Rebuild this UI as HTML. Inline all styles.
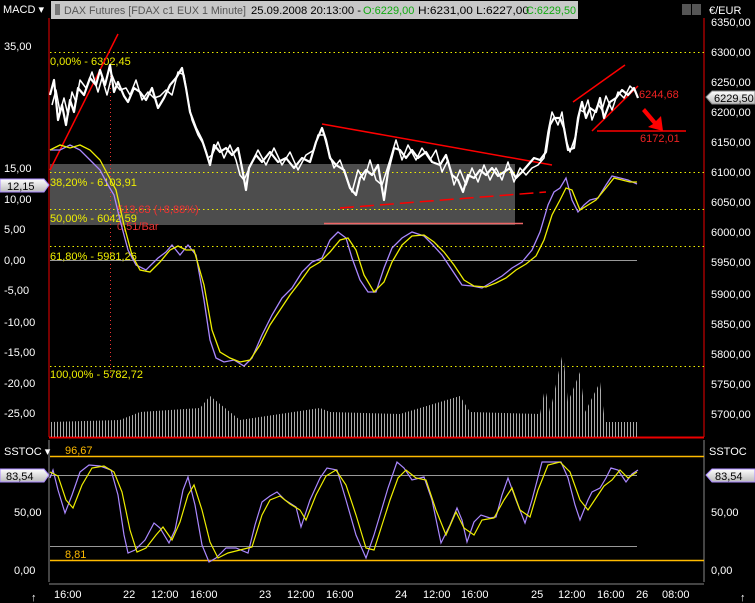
<!DOCTYPE html>
<html><head><meta charset="utf-8"><style>
html,body{margin:0;padding:0;background:#000;width:755px;height:603px;overflow:hidden}
svg{display:block}
text{font-family:"Liberation Sans",sans-serif;font-size:11px}
</style></head><body>
<svg width="755" height="603" viewBox="0 0 755 603" xmlns="http://www.w3.org/2000/svg">
<defs>
<pattern id="vs" width="3" height="10" patternUnits="userSpaceOnUse"><rect width="1" height="10" fill="#aaa"/></pattern>
<linearGradient id="lb" x1="0" y1="0" x2="0" y2="1"><stop offset="0" stop-color="#fff"/><stop offset="1" stop-color="#bbb"/></linearGradient>
</defs>
<!-- header -->
<text x="3" y="13" fill="#fff">MACD ▾</text>
<rect x="51" y="1" width="527" height="18" fill="#c8c8c8"/>
<rect x="55" y="4" width="5" height="11" fill="#777"/>
<text x="64" y="14" fill="#555" textLength="182" lengthAdjust="spacingAndGlyphs">DAX Futures [FDAX c1 EUX  1 Minute]</text>
<text x="251" y="14" fill="#000" textLength="110" lengthAdjust="spacingAndGlyphs">25.09.2008 20:13:00 - </text>
<text x="363" y="14" fill="#1a1">O:6229,00</text>
<text x="418" y="14" fill="#000" textLength="111" lengthAdjust="spacingAndGlyphs">H:6231,00 L:6227,00</text>
<text x="526" y="14" fill="#1a1" textLength="50" lengthAdjust="spacingAndGlyphs">C:6229,50</text>
<rect x="682" y="4" width="9" height="11" fill="#555"/><rect x="692" y="4" width="9" height="11" fill="#555"/>
<text x="709" y="14" fill="#fff">€/EUR</text>
<!-- axes -->
<line x1="49" y1="18" x2="49" y2="437" stroke="#e00"/>
<line x1="704" y1="18" x2="704" y2="437" stroke="#e00"/>
<line x1="49" y1="437.5" x2="704" y2="437.5" stroke="#e00" stroke-width="2"/>
<line x1="49" y1="440" x2="49" y2="582" stroke="#888"/>
<line x1="704" y1="440" x2="704" y2="582" stroke="#888"/>
<g fill="#fff" font-size="11">
<text x="4" y="50">35,00</text><text x="4" y="172">15,00</text><text x="4" y="203">10,00</text><text x="4" y="233">5,00</text><text x="4" y="264">0,00</text><text x="4" y="294">-5,00</text><text x="4" y="326">-10,00</text><text x="4" y="356">-15,00</text><text x="4" y="387">-20,00</text><text x="4" y="417">-25,00</text>
<text x="711" y="26">6350,00</text><text x="711" y="56">6300,00</text><text x="711" y="86">6250,00</text><text x="711" y="116">6200,00</text><text x="711" y="146">6150,00</text><text x="711" y="176">6100,00</text><text x="711" y="206">6050,00</text><text x="711" y="236">6000,00</text><text x="711" y="266">5950,00</text><text x="711" y="298">5900,00</text><text x="711" y="328">5850,00</text><text x="711" y="358">5800,00</text><text x="711" y="388">5750,00</text><text x="711" y="418">5700,00</text>
<text x="4" y="455">SSTOC ▾</text><text x="709" y="455">SSTOC</text>
<text x="14" y="516">50,00</text><text x="711" y="516">50,00</text><text x="14" y="574">0,00</text><text x="711" y="574">0,00</text>
</g>
<!-- grey band -->
<rect x="50" y="164" width="465" height="61" fill="#4d4d4d"/>
<line x1="324" y1="223.5" x2="523" y2="223.5" stroke="#e66" stroke-width="1.5"/>
<!-- fib lines -->
<g stroke="#ee0" stroke-dasharray="1.5,3">
<line x1="50" y1="52.5" x2="704" y2="52.5"/><line x1="50" y1="172.5" x2="704" y2="172.5"/><line x1="50" y1="209.5" x2="704" y2="209.5"/><line x1="50" y1="246.5" x2="704" y2="246.5"/><line x1="50" y1="366.5" x2="704" y2="366.5"/>
</g>
<line x1="110.5" y1="60" x2="110.5" y2="380" stroke="#e33" stroke-dasharray="1,3"/>
<line x1="50" y1="260.5" x2="637" y2="260.5" stroke="#999"/>
<g fill="#ee0"><text x="50" y="65">0,00% - 6302,45</text><text x="50" y="186">38,20% - 6103,91</text><text x="50" y="222">50,00% - 6042,59</text><text x="50" y="260">61,80% - 5981,26</text><text x="50" y="378">100,00% - 5782,72</text></g>
<g fill="#e33"><text x="117" y="213">513,63 (+8,88%)</text><text x="117" y="230">0,51/Bar</text></g>
<!-- volume -->
<polygon points="50,437 50,422 120,420 140,412 200,408 210,396 240,420 320,408 330,412 400,414 460,396 470,412 540,414 545,388 550,412 563,352 568,402 580,372 585,412 600,382 605,422 637,422 637,437" fill="url(#vs)"/>
<!-- red trend lines -->
<g stroke="#f00" stroke-width="1.5" fill="none">
<line x1="50" y1="170" x2="118" y2="34"/>
<line x1="322" y1="124" x2="552" y2="165"/>
<line x1="340" y1="208" x2="546" y2="192" stroke-dasharray="14,6"/>
<line x1="573" y1="102" x2="625" y2="65"/>
<line x1="592" y1="131" x2="638" y2="86"/>
<line x1="597" y1="131" x2="686" y2="131"/>
</g>
<polygon points="645,108 656,121 661,116 663,131 648,127 653,124 642,111" fill="#f00"/>
<g fill="#e22"><text x="639" y="98">6244,68</text><text x="640" y="142">6172,01</text></g>
<!-- price -->
<g fill="none" stroke="#fff" stroke-linejoin="round">
<polyline stroke-width="2.2" points="50,95 54,80 58,120 62,105 66,125 70,100 74,112 78,88 84,95 90,78 96,85 100,70 105,85 110,65 114,92 118,82 124,96 128,102 134,88 140,92 146,100 152,88 158,108 164,98 170,85 176,78 182,68 186,88 190,112 196,128 202,140 206,152 210,165 214,145 220,152 226,148 232,155 238,148 242,168 246,190 249,168 256,155 262,162 270,152 278,162 286,158 294,168 302,158 310,162 316,142 322,128 326,140 330,158 336,165 344,170 350,188 356,195 360,178 366,170 372,175 378,165 384,200 388,172 394,148 400,150 406,158 412,150 418,158 426,152 432,162 440,165 446,155 452,175 458,180 463,192 468,175 474,178 480,170 486,175 492,168 498,176 504,172 510,168 516,178 522,172 528,165 534,158 540,160 546,152 550,125 554,118 560,118 564,128 568,150 574,148 578,118 582,102 586,118 590,108 596,112 600,98 604,118 610,102 616,98 622,90 628,95 634,88 638,98"/>
<polyline stroke-width="1.5" points="52,105 56,90 60,112 64,98 68,115 72,92 76,102 80,80 86,88 92,72 98,92 102,78 107,95 112,75 116,85 120,90 126,88 130,95 136,80 142,100 148,92 154,98 160,96 166,90 172,95 178,72 184,75 188,100 192,120 198,135 204,145 208,158 212,155 218,142 224,158 230,145 236,160 240,175 244,180 252,162 258,150 266,165 274,148 282,165 290,152 298,170 306,155 314,150 318,135 324,135 328,150 334,168 340,160 348,182 352,192 358,170 364,180 370,160 376,180 382,185 390,160 396,140 402,160 408,145 416,160 422,148 430,160 436,150 442,172 448,160 454,185 460,170 466,185 472,168 478,182 484,165 490,180 496,168 502,180 508,162 514,182 520,168 526,175 532,168 538,165 544,158 548,132 552,112 558,125 562,112 566,140 570,152 576,135 580,110 584,112 588,100 592,120 598,104 602,110 606,96 612,110 618,92 624,98 630,86 636,92"/>
</g>
<!-- MACD -->
<polyline fill="none" stroke="#a8f" stroke-width="1.3" points="50,150 60,150 70,145 80,150 90,160 100,170 108,185 114,195 120,220 128,250 136,265 146,270 158,258 166,252 172,245 180,255 188,245 196,255 204,300 210,340 216,358 224,362 234,360 244,366 252,358 262,335 272,315 282,298 292,288 302,272 312,262 322,258 330,240 338,232 346,238 352,258 360,280 368,292 376,292 384,268 392,248 402,238 412,232 424,236 432,244 442,255 452,270 462,285 472,286 482,288 492,282 502,276 512,268 522,262 532,250 540,232 548,205 554,192 560,188 566,178 572,200 578,212 584,205 590,200 598,198 606,185 612,176 620,178 628,180 637,184"/>
<polyline fill="none" stroke="#ee0" stroke-width="1.3" points="50,150 60,145 70,148 80,145 90,150 100,160 108,175 116,190 124,225 132,255 140,270 150,272 160,262 170,250 178,246 186,250 194,250 204,285 212,330 220,352 230,358 240,362 250,360 260,345 270,325 280,310 290,295 300,282 310,268 320,262 330,252 340,240 348,238 356,250 364,275 374,292 384,282 392,262 402,245 412,236 424,235 434,242 444,252 454,265 464,280 474,286 486,287 496,283 506,278 516,270 526,264 536,256 544,240 552,215 560,200 566,188 572,190 580,210 588,205 596,200 606,188 614,178 622,180 630,182 637,182"/>
<!-- labels -->
<path d="M0,179 H44 L49,185 L44,192 H0 Z" fill="url(#lb)" stroke="#a8f"/>
<text x="7" y="190" fill="#000">12,15</text>
<path d="M755,91 H712 L706,97 L712,104 H755 Z" fill="url(#lb)" stroke="#888"/>
<text x="714" y="102" fill="#000">6229,50</text>
<!-- SSTOC -->
<line x1="50" y1="456.5" x2="704" y2="456.5" stroke="#fb0" stroke-width="1.5"/>
<line x1="50" y1="560.5" x2="704" y2="560.5" stroke="#fb0" stroke-width="1.5"/>
<line x1="50" y1="475.5" x2="637" y2="475.5" stroke="#999"/>
<line x1="50" y1="546.5" x2="637" y2="546.5" stroke="#999"/>
<text x="65" y="454" fill="#fb0">96,67</text><text x="65" y="558" fill="#fb0">8,81</text>
<polyline fill="none" stroke="#a8f" stroke-width="1.2" points="50,478 53,470 58,490 65,513 72,495 80,472 89,465 100,466 111,470 118,495 124,535 128,553 135,550 145,540 154,523 160,528 169,543 175,530 183,490 188,477 195,505 202,545 209,562 216,558 226,548 236,548 248,553 255,525 262,502 270,496 277,492 285,500 296,507 301,527 310,500 320,478 327,468 337,470 346,500 356,535 366,558 374,535 380,515 388,488 397,462 404,468 412,480 424,477 432,500 441,543 450,525 457,508 462,520 467,542 474,522 481,515 490,518 496,517 502,495 508,478 516,500 525,523 532,500 542,462 552,462 561,462 568,478 575,505 580,520 588,500 592,492 600,488 606,478 611,468 618,470 626,482 632,474 638,470"/>
<polyline fill="none" stroke="#ee0" stroke-width="1.2" points="50,472 58,476 66,500 73,508 82,485 92,468 104,466 114,472 122,492 130,530 137,552 146,548 156,535 163,527 172,540 180,522 188,495 194,485 202,510 210,542 218,558 228,553 240,550 252,547 262,515 270,500 280,496 290,504 300,510 306,520 316,495 326,476 336,470 346,485 356,515 366,548 374,550 382,525 390,500 398,478 406,470 416,478 426,480 436,510 446,535 456,512 464,528 474,535 482,520 494,518 504,500 512,488 520,510 530,517 538,490 548,465 560,462 570,472 580,500 588,510 596,498 604,486 612,480 620,470 628,478 637,472"/>
<path d="M0,469 H44 L49,475 L44,482 H0 Z" fill="url(#lb)" stroke="#a8f"/>
<text x="6" y="480" fill="#000">83,54</text>
<path d="M755,469 H712 L706,475 L712,482 H755 Z" fill="url(#lb)" stroke="#a8f"/>
<text x="715" y="480" fill="#000">83,54</text>
<!-- time axis -->
<line x1="49" y1="584" x2="704" y2="584" stroke="#888"/>
<g fill="#fff"><text x="54" y="598">16:00</text><text x="123" y="598">22</text><text x="151" y="598">12:00</text><text x="190" y="598">16:00</text><text x="259" y="598">23</text><text x="287" y="598">12:00</text><text x="326" y="598">16:00</text><text x="395" y="598">24</text><text x="423" y="598">12:00</text><text x="461" y="598">16:00</text><text x="531" y="598">25</text><text x="558" y="598">12:00</text><text x="597" y="598">16:00</text><text x="636" y="598">26</text><text x="662" y="598">08:00</text>
<text x="31" y="601">↑</text><text x="740" y="601">↑</text></g>
</svg>
</body></html>
